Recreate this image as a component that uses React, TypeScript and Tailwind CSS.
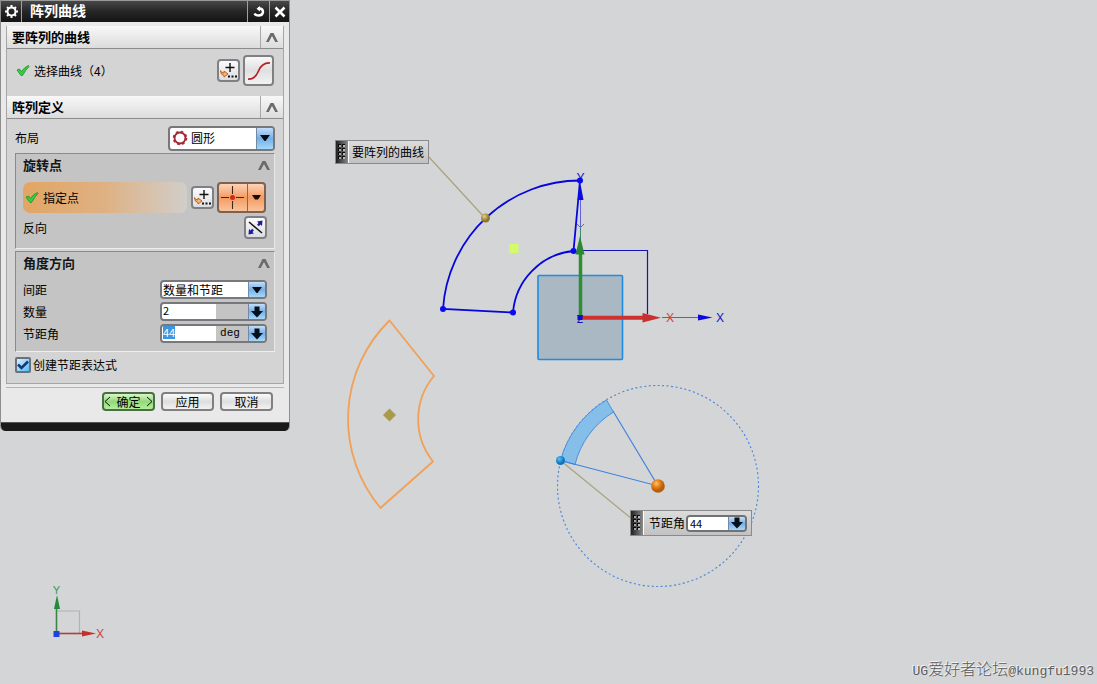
import { useEffect, useRef } from "react";
import type { ReactNode } from "react";

function Chevron() {
  return (
    <svg width="14" height="11" viewBox="0 0 14 11" aria-hidden="true">
      <path d="M1 10 L5.500 1 H8.500 L13 10 H10.200 L7 4 L3.800 10 Z" fill="#6a6a6a" />
    </svg>
  );
}

function Check() {
  return (
    <svg width="14" height="13" viewBox="0 0 14 13" aria-hidden="true">
      <path d="M1 6 L3.500 5 L5.500 7.500 Q8.500 3 12.500 1.500 L13 2.500 Q9.500 6 6.500 11.500 L5 11.500 Z" fill="#35cc46" stroke="#1e9a2c" strokeWidth="0.9" />
    </svg>
  );
}

function PointDots() {
  return (
    <svg className="shrink-0" width="19" height="19" viewBox="0 0 19 19" aria-hidden="true">
      <path d="M11 2 V11 M6.500 6.500 H15.500" stroke="#111" strokeWidth="1.400" />
      <path d="M1.500 9.500 Q2 12 5 12 L5 10 L9 13 L5 16 L5 14.500 Q1.500 14 1.500 9.500 Z" fill="#f6ba78" stroke="#bd6320" strokeWidth="1" />
      <path d="M9 14.500 h2 v2 h-2 z M12.500 14.500 h2 v2 h-2 z M16 14.500 h2 v2 h-2 z" fill="#111" />
    </svg>
  );
}

function Triangle() {
  return (
    <svg width="10" height="6" viewBox="0 0 10 6" aria-hidden="true">
      <path d="M0 0 H10 L5.500 6 H4.500 Z" fill="#0a0a14" />
    </svg>
  );
}

function BlockArrow() {
  return (
    <svg width="12" height="12" viewBox="0 0 12 12" aria-hidden="true">
      <path d="M3.500 0.500 H8.500 V5 H12 L6 11.500 L0 5 H3.500 Z" fill="#06101c" />
    </svg>
  );
}

function SectionHeader({ title }: { title: string }) {
  return (
    <div className="flex h-[23px] border-b border-[#8b8b8b] bg-gradient-to-b from-[#f8f8f8] to-[#dcdcdc]">
      <h2 className="flex-1 pl-[5px] text-[13px] leading-[22px] font-bold">{title}</h2>
      <button aria-label={title} className="flex w-[23px] items-center justify-center border-l border-[#a8a8a8]">
        <Chevron />
      </button>
    </div>
  );
}

function Group({ title, children }: { title: string; children: ReactNode }) {
  return (
    <section className="border border-t-[#8a8a8a] border-r-[#e8e8e8] border-b-[#eeeeee] border-l-[#8a8a8a] bg-[#c4c4c4] px-[7px]">
      <div className="flex h-[22px] items-center justify-between">
        <h3 className="text-[13px] leading-5 font-bold text-[#161616]">{title}</h3>
        <button aria-label={title} className="-mr-1 flex h-5 w-[14px] items-center">
          <Chevron />
        </button>
      </div>
      {children}
    </section>
  );
}

const toolButton =
  "flex h-[23px] w-[23px] shrink-0 items-center justify-center rounded-[4px] border-2 border-[#808084] bg-gradient-to-b from-[#fbfbfd] to-[#dcdde2]";
const blueEnd =
  "flex w-[17px] shrink-0 items-center justify-center border-l border-[#7289a8] bg-gradient-to-b from-[#c3def8] via-[#75afe6] to-[#a4d8fa]";
const field = "flex h-[19px] w-[107px] overflow-hidden rounded-[4px] border-2 border-[#76787c] bg-white";
const pushButton = "h-[19px] w-[53px] rounded-[4px] border-2 text-[12px] leading-[15px]";

function NumberField({ id, value, unit, selected }: { id: string; value: string; unit?: string; selected?: boolean }) {
  const ref = useRef<HTMLInputElement>(null);
  useEffect(() => {
    if (selected && ref.current) {
      ref.current.focus();
      ref.current.select();
    }
  }, [selected]);
  return (
    <div className={field}>
      <input
        ref={ref}
        id={id}
        defaultValue={value}
        className="h-[13px] w-[54px] pl-px text-[11px] leading-[13px] outline-none selection:bg-[#3d94df] selection:text-white"
      />
      <span className="flex-1 bg-[#c4c4c4] pr-1 text-center font-['Liberation_Mono',monospace] text-[11px] leading-[15px]">{unit}</span>
      <button aria-label="选项" className={blueEnd}>
        <BlockArrow />
      </button>
    </div>
  );
}

function Grip() {
  return (
    <span className="flex w-[13px] shrink-0 items-center justify-center border-r border-white bg-gradient-to-r from-[#222222] to-[#8c8c8c]">
      <svg width="10" height="18" viewBox="0 0 10 18" aria-hidden="true">
        {[1, 5, 9, 13].map((y) => (
          <g key={y}>
            <rect x="1" y={y} width="3" height="3" fill="#0c0c0c" />
            <rect x="2" y={y + 1} width="2" height="2" fill="#a5a5a5" />
            <rect x="5" y={y} width="3" height="3" fill="#0c0c0c" />
            <rect x="6" y={y + 1} width="2" height="2" fill="#bbbbbb" />
          </g>
        ))}
      </svg>
    </span>
  );
}

function Scene() {
  return (
    <svg className="absolute inset-0 h-full w-full" aria-label="图形窗口">
      <defs>
        <radialGradient id="ball" cx="38%" cy="32%">
          <stop offset="0" stopColor="#ffc070" />
          <stop offset="0.5" stopColor="#ee8618" />
          <stop offset="1" stopColor="#b5600e" />
        </radialGradient>
        <radialGradient id="gold" cx="38%" cy="32%">
          <stop offset="0" stopColor="#e5cf86" />
          <stop offset="1" stopColor="#8f742c" />
        </radialGradient>
        <radialGradient id="sky" cx="38%" cy="32%">
          <stop offset="0" stopColor="#5dc0fa" />
          <stop offset="1" stopColor="#0b76bd" />
        </radialGradient>
      </defs>

      <g fill="none" stroke="#0505de" strokeWidth="1.800">
        <path d="M443 309 A137.500 137.500 0 0 1 580 180.500 L573.500 251 A67.300 67.300 0 0 0 513 312.500 Z" />
      </g>
      <path d="M580 250.500 H647.500 V314" fill="none" stroke="#1414b4" strokeWidth="1.200" />
      <rect x="538" y="275.500" width="84.500" height="84" rx="1" fill="#89a0b4" fillOpacity="0.560" stroke="#1c8ce4" strokeWidth="1.600" />

      <path d="M580.500 184 V318" stroke="#6262d8" strokeWidth="1" />
      <path d="M580.500 184 L577.500 200 H583.500 Z" fill="#0a0ae0" />
      <path d="M577 224 L580.500 227.500 L584 224 M580.500 227 V238" fill="none" stroke="#3d8a72" />
      <path d="M662 317.500 H700" stroke="#5b5bd4" />
      <path d="M698 314.500 L712.500 317.500 L698 320.500 Z" fill="#0a0ae0" />
      <path d="M580.500 315 V252" stroke="#2f8d32" strokeWidth="3.500" />
      <path d="M580 236 L575.500 254.500 H584.500 Z" fill="#2b8730" />
      <path d="M582 317.800 H645" stroke="#cf3030" strokeWidth="4" />
      <path d="M642.500 313 L661 317.800 L642.500 322.500 Z" fill="#c73030" />
      <rect x="577.500" y="315" width="5" height="5" fill="#0a0ad8" />

      <g className="font-['Inter',sans-serif] text-[12px]" textAnchor="middle">
        <text x="580.500" y="182" fill="#1515c8">Y</text>
        <text x="580" y="323" fill="#1515c8" className="text-[11px]">Z</text>
        <text x="670" y="322" fill="#d54848">X</text>
        <text x="720" y="322" fill="#1c1cc4">X</text>
        <text x="56.500" y="594" fill="#3b9a57" className="text-[11px]">Y</text>
        <text x="100" y="638" fill="#cb4b4b">X</text>
      </g>
      <g fill="#0a0af0">
        <circle cx="580" cy="180.500" r="3" />
        <circle cx="573.500" cy="251" r="3" />
        <circle cx="443" cy="309" r="3" />
        <circle cx="513" cy="312.500" r="3" />
      </g>

      <path d="M428 156 L485 218" stroke="#aaa27e" strokeWidth="1.200" />
      <circle cx="485.500" cy="218" r="4.500" fill="url(#gold)" />
      <rect x="509.500" y="244" width="9" height="9" fill="#d3fb6b" />

      <path d="M389.500 320.500 L434 376 A67.300 67.300 0 0 0 433 461.500 L380.500 508 A138 138 0 0 1 389.500 320.500 Z" fill="none" stroke="#f2a057" strokeWidth="1.800" strokeLinejoin="round" />
      <path d="M389.500 408.500 L396 415 L389.500 421.500 L383 415 Z" fill="#aa9a4c" />

      <circle cx="658" cy="486" r="100.500" fill="none" stroke="#4a84dc" strokeWidth="1.100" strokeDasharray="2 2.500" />
      <path d="M560.500 460.500 A100.500 100.500 0 0 1 606.500 400 L613.500 412 A86 86 0 0 0 575 464.500 Z" fill="#85bfe9" stroke="#4a90de" />
      <path d="M613 411 L658 486 L560.500 460.500" fill="none" stroke="#3c80e0" strokeWidth="1.100" />
      <path d="M560.500 460.500 L632 519" stroke="#aaa27e" strokeWidth="1.200" />
      <circle cx="560.500" cy="460.500" r="4.500" fill="url(#sky)" />
      <circle cx="658" cy="486" r="6.800" fill="url(#ball)" />

      <path d="M57 611 H79.500 V633" fill="none" stroke="#b2b2b2" strokeWidth="1.200" />
      <path d="M56.500 634 V606" stroke="#3d8549" strokeWidth="1.600" />
      <path d="M57 595 L54 609 H60 Z" fill="#238a35" />
      <path d="M57 633.500 H86" stroke="#b93a3a" strokeWidth="1.600" />
      <path d="M82 630.500 L96 633.500 L82 636.500 Z" fill="#c62f2f" />
      <rect x="53.500" y="631" width="6" height="6" fill="#1c43dc" />
    </svg>
  );
}

function PatternDialog() {
  return (
    <div role="dialog" aria-label="阵列曲线" className="relative w-[290px] overflow-hidden rounded-b-[5px] border-x border-[#8e8e8e] bg-[#e9e9e9]">
      <div className="flex h-[22px] border-t border-[#9a9a9a] bg-gradient-to-b from-[#484848] via-[#262626] to-[#141414] text-white">
        <button aria-label="设置" className="flex w-[21px] items-center justify-center border-r border-[#a0a0a0]">
          <svg width="15" height="15" viewBox="0 0 15 15" aria-hidden="true">
            <circle cx="7.500" cy="7.500" r="4" fill="none" stroke="#fff" strokeWidth="2" />
            <path d="M7.500 1 V4 M7.500 11 V14 M1 7.500 H4 M11 7.500 H14 M3 3 L5 5 M10 10 L12 12 M12 3 L10 5 M5 10 L3 12" stroke="#fff" strokeWidth="2" />
          </svg>
        </button>
        <h1 className="flex-1 pl-2 text-[14px] leading-[19px] font-bold">阵列曲线</h1>
        <button aria-label="重置" className="flex w-[22px] items-center justify-center border-l border-[#a0a0a0]">
          <svg width="13" height="13" viewBox="0 0 13 13" aria-hidden="true">
            <path d="M6 3.500 H8 Q11 4 11 7 Q10.500 10.500 6.500 10.500 Q3.500 10.500 2.500 8.500" fill="none" stroke="#fff" strokeWidth="2.400" />
            <path d="M8 1 V6.500 L4.500 3.800 Z" fill="#fff" />
          </svg>
        </button>
        <button aria-label="关闭" className="flex w-[20px] items-center justify-center border-l border-[#a0a0a0]">
          <svg width="12" height="12" viewBox="0 0 12 12" aria-hidden="true">
            <path d="M1.500 1.500 L10.500 10.500 M10.500 1.500 L1.500 10.500" stroke="#fff" strokeWidth="2.600" />
          </svg>
        </button>
      </div>

      <div className="mx-[5px] mt-1 border-x border-b border-[#a6a6a6] bg-[#d4d4d4]">
        <SectionHeader title="要阵列的曲线" />
        <div className="flex h-[47px] items-center pr-[9px] pb-1 pl-[9px]">
          <Check />
          <span className="flex-1 pl-1 text-[12px]">选择曲线（4）</span>
          <button aria-label="点构造器" className={toolButton}>
            <PointDots />
          </button>
          <button aria-label="曲线" className="ml-[3px] flex h-[31px] w-[31px] items-center justify-center rounded-[4px] border-2 border-[#808084] bg-gradient-to-b from-[#f8f8f8] via-[#e0e0e0] to-[#f2f2f2]">
            <svg width="24" height="22" viewBox="0 0 24 22" aria-hidden="true">
              <path d="M1 19 Q8 19.500 11.500 11 Q15 2.500 23 3" fill="none" stroke="#b42028" strokeWidth="1.700" />
            </svg>
          </button>
        </div>

        <SectionHeader title="阵列定义" />
        <div className="px-2 pt-[7px] pb-[10px]">
          <div className="mb-[3px] flex h-6 items-center justify-between">
            <label htmlFor="layout" className="text-[12px]">布局</label>
            <div className="relative flex h-[25px] w-[107px] overflow-hidden rounded-[4px] border-2 border-[#76787c] bg-white">
              <svg className="absolute top-[2px] left-[2px]" width="16" height="16" viewBox="0 0 16 16" aria-hidden="true">
                <circle cx="8" cy="8" r="5.500" fill="none" stroke="#9c2632" strokeWidth="1.800" />
                <circle cx="8" cy="8" r="6" fill="none" stroke="#a82c37" strokeWidth="2.600" strokeDasharray="2.400 2.312" />
              </svg>
              <select id="layout" className="w-full flex-1 appearance-none bg-transparent pl-[21px] text-[12px] leading-5 outline-none">
                <option>圆形</option>
              </select>
              <span className={blueEnd}>
                <Triangle />
              </span>
            </div>
          </div>

          <Group title="旋转点">
            <div className="mt-[6px] flex h-[31px] items-center">
              <div className="flex h-[31px] w-[164px] items-center rounded-[7px] bg-gradient-to-r from-[#e3a563] via-[#deb183] to-[#d1ceca] pl-[2px]">
                <Check />
                <span className="pl-1 text-[12px]">指定点</span>
              </div>
              <button aria-label="点构造器" className={`${toolButton} ml-1`}>
                <PointDots />
              </button>
              <button aria-label="指定点" className="ml-[3px] flex h-[31px] w-[49px] items-center rounded-[4px] border-2 border-[#80604f] bg-gradient-to-b from-[#fbd5b7] via-[#f39b62] to-[#fac39a]">
                <svg width="28" height="27" viewBox="0 0 28 27" aria-hidden="true">
                  <path d="M13.500 2 V10 M13.500 17 V25 M2 13.500 H10 M17 13.500 H25" stroke="#3b2a22" strokeWidth="1.100" />
                  <circle cx="13.500" cy="13.500" r="2.500" fill="#d42a14" />
                </svg>
                <span className="flex h-full flex-1 items-center justify-center border-l border-[#a65e38]">
                  <svg width="9" height="5" viewBox="0 0 9 5" aria-hidden="true">
                    <path d="M0 0 H9 L6 4.500 H3 Z" fill="#160c05" />
                  </svg>
                </span>
              </button>
            </div>
            <div className="mt-[3px] mb-[9px] flex h-[23px] items-center justify-between">
              <span className="text-[12px]">反向</span>
              <button aria-label="反向" className={toolButton}>
                <svg className="shrink-0" width="19" height="19" viewBox="0 0 19 19" aria-hidden="true">
                  <path d="M3 4 L16 15" stroke="#111" strokeWidth="1.500" />
                  <path d="M12 7.500 L14 5 M7 11.500 L5 14" stroke="#1b1b9c" strokeWidth="2.400" />
                  <path d="M16.500 2.500 L16 8 L11 3.500 Z M2.500 16.500 L3 11 L8 15.500 Z" fill="#1b1b9c" />
                </svg>
              </button>
            </div>
          </Group>

          <div className="h-[2px]" />

          <Group title="角度方向">
            <div className="mt-[6px] mb-[8px] flex flex-col gap-[3px] text-[12px]">
              <div className="flex h-[19px] items-center justify-between">
                <label htmlFor="spacing">间距</label>
                <div className={field}>
                  <select id="spacing" className="w-full flex-1 appearance-none bg-transparent pl-px text-[12px] leading-[15px] outline-none">
                    <option>数量和节距</option>
                  </select>
                  <span className={blueEnd}>
                    <Triangle />
                  </span>
                </div>
              </div>
              <div className="flex h-[19px] items-center justify-between">
                <label htmlFor="count">数量</label>
                <NumberField id="count" value="2" />
              </div>
              <div className="flex h-[19px] items-center justify-between">
                <label htmlFor="angle">节距角</label>
                <NumberField id="angle" value="44" unit="deg" selected />
              </div>
            </div>
          </Group>

          <label className="mt-[5px] flex h-[16px] items-center gap-[2px] text-[12px]">
            <span className="relative flex h-[16px] w-[16px]">
              <input type="checkbox" defaultChecked className="h-[16px] w-[16px] appearance-none rounded-[2px] border-2 border-[#66727e] bg-gradient-to-br from-[#d9ecfb] to-[#4cbcf4]" />
              <svg className="pointer-events-none absolute top-[2px] left-[2px]" width="12" height="12" viewBox="0 0 12 12" aria-hidden="true">
                <path d="M1 5.500 L4.500 9 L11 2.500" fill="none" stroke="#103a78" strokeWidth="2.600" />
              </svg>
            </span>
            创建节距表达式
          </label>
        </div>
      </div>

      <div className="mx-[5px] mt-[3px] border-t border-[#b4b4b4]" />
      <div className="flex h-[34px] justify-end gap-[6px] pt-[4px] pr-4">
        <button className={`${pushButton} flex items-center justify-between border-[#4a6e45] bg-gradient-to-b from-[#d9f6c9] via-[#93da77] to-[#b5ee9c]`}>
          <svg width="7" height="11" viewBox="0 0 7 11" aria-hidden="true">
            <path d="M6 1 L1 5.500 L6 10" fill="none" stroke="#111" />
          </svg>
          确定
          <svg width="7" height="11" viewBox="0 0 7 11" aria-hidden="true">
            <path d="M1 1 L6 5.500 L1 10" fill="none" stroke="#111" />
          </svg>
        </button>
        <button className={`${pushButton} border-[#808080] bg-gradient-to-b from-[#fafafa] via-[#dedede] to-[#f2f2f2]`}>应用</button>
        <button className={`${pushButton} border-[#808080] bg-gradient-to-b from-[#fafafa] via-[#dedede] to-[#f2f2f2]`}>取消</button>
      </div>
      <div className="h-[9px] border-t border-[#555] bg-[#1a1a1a]" />
    </div>
  );
}

export default function App() {
  return (
    <main className="relative min-h-screen overflow-hidden bg-[#d3d5d6] font-['Noto_Sans_CJK_SC',sans-serif] text-black">
      <Scene />
      <PatternDialog />

      <div className="absolute top-[140px] left-[335px] flex h-6 border border-[#8a8a8a] bg-gradient-to-b from-[#dcdcdc] to-[#c2c2c2]">
        <Grip />
        <span className="pr-1 pl-[3px] text-[12px] leading-[22px]">要阵列的曲线</span>
      </div>

      <div className="absolute top-[510px] left-[630px] flex h-[26px] items-stretch border border-[#8a8a8a] bg-gradient-to-b from-[#dcdcdc] to-[#c2c2c2] pr-1">
        <Grip />
        <label htmlFor="pitch" className="pr-px pl-[5px] text-[12px] leading-6">节距角</label>
        <div className="flex h-[17px] w-[61px] self-center overflow-hidden rounded-[4px] border-2 border-[#707276]">
          <input id="pitch" defaultValue="44" className="w-0 flex-1 bg-white pl-[2px] text-[11px] leading-[13px] outline-none" />
          <button aria-label="选项" className={blueEnd}>
            <BlockArrow />
          </button>
        </div>
      </div>

      <footer className="absolute right-[3px] bottom-0 flex items-baseline text-[16px] leading-6 text-[#5c5c5c] [text-shadow:-1px_-1px_0_#f4f4f4]">
        <span className="font-['Liberation_Mono',monospace] text-[13px]">UG</span>
        <span className="font-light">爱好者论坛</span>
        <span className="font-['Liberation_Mono',monospace] text-[13px]">@kungfu1993</span>
      </footer>
    </main>
  );
}
